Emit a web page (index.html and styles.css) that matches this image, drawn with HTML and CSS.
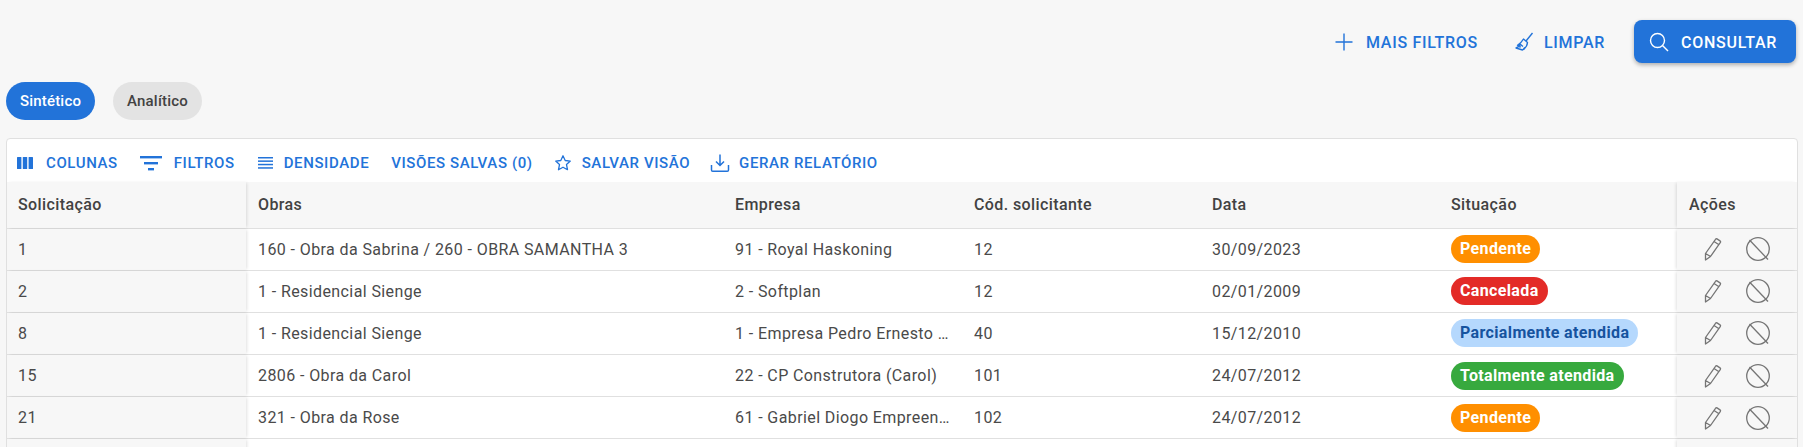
FILE: index.html
```html
<!DOCTYPE html>
<html lang="pt-BR">
<head>
    <meta charset="UTF-8">
    <title>Solicitações</title>
    <link rel="stylesheet" href="styles.css">
</head>
<body>
    <div class="top-actions">
        <button class="btn-text btn-mais">
            <svg width="20" height="20" viewBox="0 0 20 20"><path d="M10 1.500v17M1.500 10h17" stroke="currentColor" stroke-width="1.400" fill="none"/></svg>
            MAIS FILTROS
        </button>
        <button class="btn-text btn-limpar">
            <svg width="20" height="20" viewBox="0 0 20 20" fill="none" stroke="currentColor" stroke-width="1.400" stroke-linejoin="round"><path d="M18.500 1 12 9"/><path d="M9.500 7l4 3.500c-.3 3-2.500 6-5 7.500L2 16c2.500-1 4-2 4.500-3.500-1 .5-2 .8-3 .8 2.500-1.500 4.500-3.800 6-6.300z"/><path d="M6.500 12.500 9 14.500M5.500 15.500l1-1.300M10 17l.6-1.500"/></svg>
            LIMPAR
        </button>
        <button class="btn-main">
            <svg width="20" height="20" viewBox="0 0 20 20" fill="none" stroke="currentColor" stroke-width="1.400"><circle cx="8.500" cy="8.500" r="7"/><path d="M13.500 13.500l5.500 5.500"/></svg>
            CONSULTAR
        </button>
    </div>

    <div class="chips">
        <span class="chip chip-active">Sintético</span>
        <span class="chip">Analítico</span>
    </div>

    <div class="grid-card">
        <div class="toolbar">
            <button class="tool tool-colunas">
                <svg width="18" height="18" viewBox="0 0 18 18" fill="currentColor"><rect x="1" y="3" width="4.400" height="12" rx=".5"/><rect x="6.800" y="3" width="4.400" height="12" rx=".5"/><rect x="12.600" y="3" width="4.400" height="12" rx=".5"/></svg>
                COLUNAS
            </button>
            <button class="tool tool-filtros">
                <svg width="22" height="18" viewBox="0 0 22 18" fill="currentColor"><rect x="0" y="2" width="22" height="2.400"/><rect x="4" y="8" width="14" height="2.400"/><rect x="8" y="14" width="6" height="2.400"/></svg>
                FILTROS
            </button>
            <button class="tool tool-densidade">
                <svg width="16" height="18" viewBox="0 0 16 18" fill="currentColor"><rect y="3" width="15" height="1.500"/><rect y="6.400" width="15" height="1.500"/><rect y="9.800" width="15" height="1.500"/><rect y="13.200" width="15" height="1.500"/></svg>
                DENSIDADE
            </button>
            <button class="tool tool-visoes">VISÕES SALVAS (0)</button>
            <button class="tool tool-salvar">
                <svg width="18" height="18" viewBox="0 0 18 18" fill="none" stroke="currentColor" stroke-width="1.300" stroke-linejoin="round"><path d="M9 1.800l2.200 4.700 5.100.6-3.800 3.500 1 5.100L9 13.200l-4.500 2.500 1-5.100L1.700 7.100l5.100-.6z"/></svg>
                SALVAR VISÃO
            </button>
            <button class="tool tool-relatorio">
                <svg width="20" height="20" viewBox="0 0 20 20" fill="none" stroke="currentColor" stroke-width="1.500"><path d="M10 1.500v11M6 8.500l4 4 4-4"/><path d="M1.500 12v5c0 .7.500 1.300 1.200 1.300h14.600c.7 0 1.200-.6 1.200-1.300v-5"/></svg>
                GERAR RELATÓRIO
            </button>
        </div>

        <div class="row row-head">
            <div class="cell cell-id">Solicitação</div>
            <div class="cell">Obras</div>
            <div class="cell">Empresa</div>
            <div class="cell">Cód. solicitante</div>
            <div class="cell">Data</div>
            <div class="cell">Situação</div>
            <div class="cell cell-acoes">Ações</div>
        </div>

        <div class="row">
            <div class="cell cell-id">1</div>
            <div class="cell">160 - Obra da Sabrina / 260 - OBRA SAMANTHA 3</div>
            <div class="cell">91 - Royal Haskoning</div>
            <div class="cell">12</div>
            <div class="cell">30/09/2023</div>
            <div class="cell"><span class="badge badge-pendente">Pendente</span></div>
            <div class="cell cell-acoes">
                <svg class="icon-edit" width="20" height="24" viewBox="0 0 20 24"><use href="#i-edit"/></svg>
                <svg class="icon-block" width="24" height="24" viewBox="0 0 24 24"><use href="#i-block"/></svg>
            </div>
        </div>
        <div class="row">
            <div class="cell cell-id">2</div>
            <div class="cell">1 - Residencial Sienge</div>
            <div class="cell">2 - Softplan</div>
            <div class="cell">12</div>
            <div class="cell">02/01/2009</div>
            <div class="cell"><span class="badge badge-cancelada">Cancelada</span></div>
            <div class="cell cell-acoes">
                <svg class="icon-edit" width="20" height="24" viewBox="0 0 20 24"><use href="#i-edit"/></svg>
                <svg class="icon-block" width="24" height="24" viewBox="0 0 24 24"><use href="#i-block"/></svg>
            </div>
        </div>
        <div class="row">
            <div class="cell cell-id">8</div>
            <div class="cell">1 - Residencial Sienge</div>
            <div class="cell">1 - Empresa Pedro Ernesto …</div>
            <div class="cell">40</div>
            <div class="cell">15/12/2010</div>
            <div class="cell"><span class="badge badge-parcial">Parcialmente atendida</span></div>
            <div class="cell cell-acoes">
                <svg class="icon-edit" width="20" height="24" viewBox="0 0 20 24"><use href="#i-edit"/></svg>
                <svg class="icon-block" width="24" height="24" viewBox="0 0 24 24"><use href="#i-block"/></svg>
            </div>
        </div>
        <div class="row">
            <div class="cell cell-id">15</div>
            <div class="cell">2806 - Obra da Carol</div>
            <div class="cell">22 - CP Construtora (Carol)</div>
            <div class="cell">101</div>
            <div class="cell">24/07/2012</div>
            <div class="cell"><span class="badge badge-total">Totalmente atendida</span></div>
            <div class="cell cell-acoes">
                <svg class="icon-edit" width="20" height="24" viewBox="0 0 20 24"><use href="#i-edit"/></svg>
                <svg class="icon-block" width="24" height="24" viewBox="0 0 24 24"><use href="#i-block"/></svg>
            </div>
        </div>
        <div class="row">
            <div class="cell cell-id">21</div>
            <div class="cell">321 - Obra da Rose</div>
            <div class="cell">61 - Gabriel Diogo Empreen…</div>
            <div class="cell">102</div>
            <div class="cell">24/07/2012</div>
            <div class="cell"><span class="badge badge-pendente">Pendente</span></div>
            <div class="cell cell-acoes">
                <svg class="icon-edit" width="20" height="24" viewBox="0 0 20 24"><use href="#i-edit"/></svg>
                <svg class="icon-block" width="24" height="24" viewBox="0 0 24 24"><use href="#i-block"/></svg>
            </div>
        </div>
        <div class="row">
            <div class="cell cell-id"></div>
            <div class="cell"></div>
            <div class="cell"></div>
            <div class="cell"></div>
            <div class="cell"></div>
            <div class="cell"></div>
            <div class="cell cell-acoes"></div>
        </div>
    </div>

    <svg class="icon-defs" width="0" height="0">
        <symbol id="i-edit" viewBox="0 0 20 24">
            <path d="M2.500 23v-6.500L12.500 2.300c.4-.6 1-.7 1.500-.4l3 2c.6.400.7 1 .4 1.500L7.500 19.500zM2.500 16.500l5 3M11 4.500l5 3.300" fill="none" stroke="#757575" stroke-width="1.300" stroke-linejoin="round"/>
        </symbol>
        <symbol id="i-block" viewBox="0 0 24 24">
            <circle cx="12" cy="12" r="11.300" fill="none" stroke="#757575" stroke-width="1.300"/>
            <path d="M3.500 3 22 22.500" fill="none" stroke="#757575" stroke-width="1.300"/>
        </symbol>
    </svg>
</body>
</html>
```

FILE: styles.css
```css
html, body {
    height: 447px;
    overflow: hidden;
}
body {
    margin: 0;
    background-color: #f7f7f7;
    color: #4a4a4a;
    font-family: Roboto, "Liberation Sans", sans-serif;
    font-size: 16px;
}
button {
    font-family: inherit;
    border: none;
    background: none;
    padding: 0;
    cursor: pointer;
}
svg {
    display: block;
    flex-shrink: 0;
}
.icon-defs {
    position: absolute;
}

.top-actions {
    display: flex;
    justify-content: flex-end;
    align-items: center;
    height: 43px;
    padding: 20px 7px 0 0;
}
.btn-text {
    display: flex;
    align-items: center;
    padding-top: 2px;
    color: #2273d9;
    font-size: 16px;
    font-weight: 500;
    letter-spacing: 0.7px;
}
.btn-text svg {
    margin-bottom: 2px;
}
.btn-mais {
    gap: 12px;
    margin-right: 36px;
}
.btn-limpar {
    gap: 10px;
    margin-right: 29px;
}
.btn-main {
    display: flex;
    align-items: center;
    gap: 12px;
    width: 162px;
    height: 43px;
    padding: 2px 0 0 15px;
    color: #fff;
    font-size: 16px;
    font-weight: 500;
    letter-spacing: 0.75px;
    background-color: #2273d9;
    border-radius: 8px;
    box-shadow: 0 2px 4px rgba(0, 0, 0, 0.3);
}
.btn-main svg {
    margin-bottom: 2px;
}

.chips {
    display: flex;
    gap: 18px;
    margin: 19px 0 18px 6px;
}
.chip {
    display: flex;
    align-items: center;
    justify-content: center;
    width: 89px;
    height: 38px;
    border-radius: 19px;
    background-color: #e3e3e3;
    color: #424242;
    font-size: 15px;
    font-weight: 500;
    letter-spacing: 0.2px;
}
.chip-active {
    background-color: #2273d9;
    color: #fff;
}

.grid-card {
    margin-left: 6px;
    width: 1790px;
    background-color: #fff;
    border: 1px solid #e0e0e0;
    border-radius: 4px 4px 0 0;
}
.toolbar {
    display: flex;
    align-items: center;
    height: 43px;
    box-sizing: border-box;
    padding: 4px 0 0 9px;
}
.tool {
    display: flex;
    align-items: center;
    color: #2273d9;
    font-size: 15px;
    font-weight: 500;
    letter-spacing: 0.6px;
    gap: 12px;
}
.tool-colunas { margin-right: 22px; }
.tool-filtros { margin-right: 23px; }
.tool-densidade { gap: 10px; margin-right: 22px; }
.tool-visoes { margin-right: 21px; }
.tool-salvar { gap: 10px; margin-right: 20px; }
.tool-relatorio { gap: 9px; }

.row {
    display: grid;
    grid-template-columns: 239px 477px 239px 238px 239px 238px 1fr;
    height: 42.2px;
    border-bottom: 1px solid #e0e0e0;
    box-sizing: border-box;
}
.row-head {
    height: 46.5px;
    background-color: #f7f7f7;
    font-weight: 500;
    color: #424242;
}
.cell {
    display: flex;
    align-items: center;
    padding: 0 12px;
    min-width: 0;
    letter-spacing: 0.4px;
    white-space: nowrap;
}
.cell-id {
    background-color: #f7f7f7;
    box-shadow: 2px 0 3px -1px rgba(0, 0, 0, 0.12);
    padding-left: 11px;
}
.cell-acoes {
    background-color: #f7f7f7;
    box-shadow: -2px 0 3px -1px rgba(0, 0, 0, 0.12);
    padding-right: 16px;
}
.cell-acoes .icon-edit {
    margin-left: 14px;
    margin-right: 23px;
}
.badge {
    padding: 0 9px;
    height: 28px;
    line-height: 28px;
    border-radius: 14px;
    font-weight: 700;
    letter-spacing: 0.36px;
    color: #fff;
}
.badge-pendente { background-color: #ff8f00; }
.badge-cancelada { background-color: #e32b27; }
.badge-parcial { background-color: #b5d8fd; color: #15539f; }
.badge-total { background-color: #37a93e; }
```
